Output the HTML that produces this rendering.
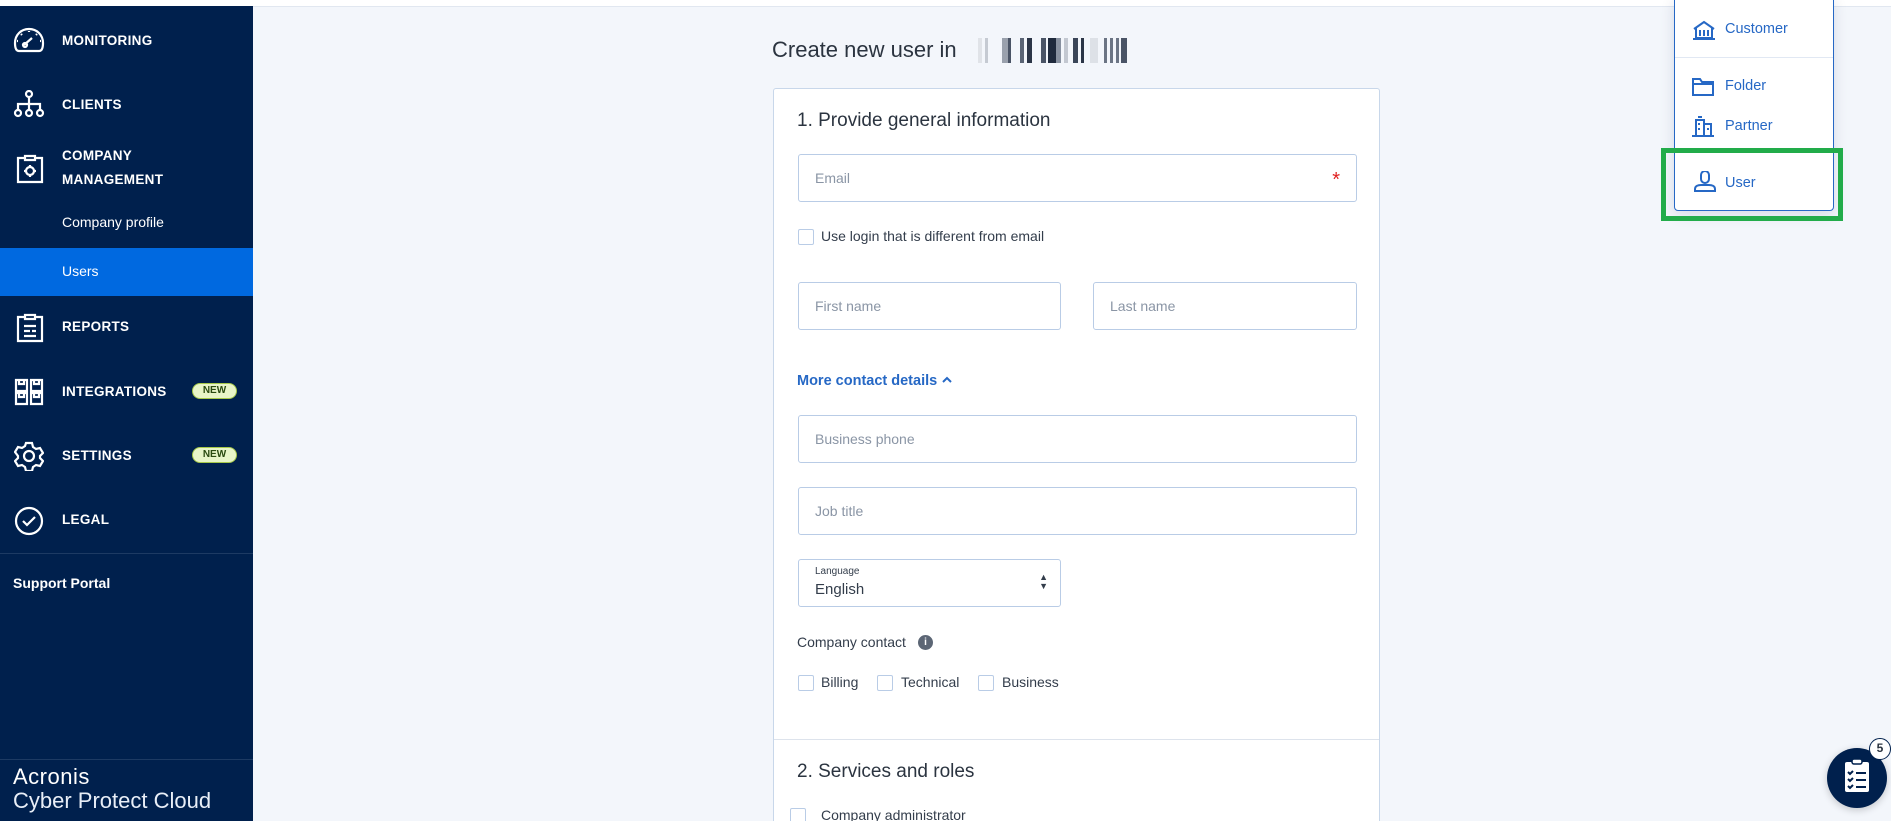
<!DOCTYPE html>
<html style="overflow:hidden;width:1891px;height:821px"><head><meta charset="utf-8"><style>
*{box-sizing:border-box;margin:0;padding:0}
body{width:1891px;height:821px;overflow:hidden;background:#f3f6fb;font-family:"Liberation Sans",sans-serif;position:relative}
.top{position:absolute;left:0;top:0;width:1891px;height:7px;background:#fff;border-bottom:1px solid #e1e7f0}
.side{position:absolute;left:0;top:6px;width:253px;height:815px;background:#00204d;color:#fff;overflow:hidden}
.nav{position:absolute;left:62px;font-weight:bold;font-size:13.5px;letter-spacing:.3px}
.sub{position:absolute;left:62px;font-size:14px}
.ic{position:absolute;left:13px}
.badge{position:absolute;left:192px;width:45px;height:16px;border-radius:8px;background:#e8f5c8;border:1.5px solid #a7c94a;color:#2a4a10;font-size:10px;font-weight:bold;text-align:center;line-height:13px}
.sep{position:absolute;left:0;width:253px;height:1px;background:#1d3a63}
.abs{position:absolute}
.card{position:absolute;left:773px;top:88px;width:607px;height:740px;background:#fff;border:1px solid #c8d7ea;border-radius:3px}
.inp{position:absolute;height:48px;border:1px solid #b9cce6;border-radius:3px;background:#fff;color:#8a95a5;font-size:14px;padding-left:16px;line-height:46px}
.cb{position:absolute;width:16px;height:16px;border:1px solid #b9cce6;border-radius:2px;background:#fff}
.lbl{position:absolute;font-size:14px;color:#333d4b}
.dd{position:absolute;left:1674px;top:-4px;width:160px;height:215px;background:#fff;border:1px solid #2668c5;border-radius:4px;box-shadow:0 4px 14px rgba(0,32,77,.12)}
.ddi{position:absolute;left:50px;font-size:14.5px;color:#2668c5}
</style></head><body>
<div class="top"></div>
<div class="side">
<svg class="ic" style="top:20px" width="32" height="28" viewBox="0 0 32 28" fill="none" stroke="#fff" stroke-width="2.2"><path d="M6 25C3 25 2 22 2 17 2 9 8 3 16 3s14 6 14 14c0 5-1 8-4 8z"/><path d="M11 19l8-7"/><circle cx="12" cy="19" r="2"/><path d="M9 9l-1-1M16 6V5M23 9l1-1M5 15H4M27 15h1"/></svg>
<svg class="ic" style="top:84px" width="32" height="28" viewBox="0 0 32 28" fill="none" stroke="#fff" stroke-width="2.2"><circle cx="16" cy="4" r="3"/><path d="M16 7v7M5 20v-6h22v6M16 14v6"/><circle cx="5" cy="23" r="3"/><circle cx="16" cy="23" r="3"/><circle cx="27" cy="23" r="3"/></svg>
<svg class="ic" style="top:147px;left:16px" width="28" height="31" viewBox="0 0 28 31" fill="none" stroke="#fff" stroke-width="2.2"><path d="M9 5H2v24h24V5h-7"/><path d="M9 7V3h10v4z"/><circle cx="14" cy="18" r="4"/><path d="M14 12v2M14 22v2M8 18h2M18 18h2"/></svg>
<div class="nav" style="top:27px">MONITORING</div>
<div class="nav" style="top:91px">CLIENTS</div>
<div class="nav" style="top:142px">COMPANY</div>
<div class="nav" style="top:166px">MANAGEMENT</div>
<div class="sub" style="top:208px">Company profile</div>
<div class="abs" style="left:0;top:242px;width:253px;height:48px;background:#0069e0"></div>
<div class="sub" style="top:257px">Users</div>
<svg class="ic" style="top:306px;left:16px" width="28" height="31" viewBox="0 0 28 31" fill="none" stroke="#fff" stroke-width="2.2"><path d="M9 5H2v24h24V5h-7"/><path d="M9 7V3h10v4z"/><path d="M8 14h12M8 19h6M16 19h4M8 24h12"/></svg>
<svg class="ic" style="top:372px;left:14px" width="30" height="28" viewBox="0 0 30 28" fill="none" stroke="#fff" stroke-width="2.2"><path d="M2 2h11v11H2zM17 2h11v11H17zM2 15h11v11H2zM17 15h11v11H17z"/><path d="M5 2v4h5V2M20 2v4h5V2M5 15v4h5v-4M20 15v4h5v-4"/></svg>
<svg class="ic" style="top:435px;left:14px" width="30" height="30" viewBox="0 0 30 30" fill="none" stroke="#fff" stroke-width="2.2"><path d="M12 2h6l1 4 3 2 4-1 3 5-3 3v2l3 3-3 5-4-1-3 2-1 4h-6l-1-4-3-2-4 1-3-5 3-3v-2L1 11l3-5 4 1 3-2z"/><circle cx="15" cy="15" r="5"/></svg>
<svg class="ic" style="top:500px;left:14px" width="30" height="30" viewBox="0 0 30 30" fill="none" stroke="#fff" stroke-width="2.2"><circle cx="15" cy="15" r="13"/><path d="M9 15l4 4 8-8"/></svg>
<div class="nav" style="top:313px">REPORTS</div>
<div class="nav" style="top:378px">INTEGRATIONS</div><div class="badge" style="top:377px">NEW</div>
<div class="nav" style="top:442px">SETTINGS</div><div class="badge" style="top:441px">NEW</div>
<div class="nav" style="top:506px">LEGAL</div>
<div class="sep" style="top:547px"></div>
<div class="nav" style="left:13px;top:569px;font-size:14px;letter-spacing:0">Support Portal</div>
<div class="sep" style="top:753px"></div>
<div class="abs" style="left:13px;top:758px;font-size:22px;letter-spacing:.5px">Acronis</div>
<div class="abs" style="left:13px;top:782px;font-size:22px;font-weight:300;color:#e8eef7">Cyber Protect Cloud</div>
</div>

<div class="abs" style="left:772px;top:37px;font-size:22px;color:#2b3440">Create new user in</div>
<svg class="abs" style="left:978px;top:38px" width="190" height="25"><g fill="#5a6475">
<rect x="0" width="4" height="25" fill="#e0e3e8"/><rect x="7" width="3" height="25" fill="#c5cad2"/><rect x="24" width="6" height="25" fill="#9aa1ad"/><rect x="30" width="3" height="25" fill="#4a5466"/><rect x="42" width="4" height="25"/><rect x="49" width="5" height="25" fill="#2b3547"/><rect x="63" width="5" height="25" fill="#4a5466"/><rect x="70" width="8" height="25" fill="#1f2a3d"/><rect x="78" width="5" height="25" fill="#8891a0"/><rect x="86" width="4" height="25" fill="#c3c8d1"/><rect x="95" width="5" height="25" fill="#3a4558"/><rect x="103" width="3" height="25" fill="#2b3547"/><rect x="112" width="8" height="25" fill="#dde1e7"/><rect x="126" width="3" height="25" fill="#6b7484"/><rect x="132" width="3" height="25" fill="#6b7484"/><rect x="138" width="3" height="25" fill="#6b7484"/><rect x="143" width="6" height="25" fill="#4a5466"/></g></svg>

<div class="card">
<div class="abs" style="left:23px;top:21px;font-size:19px;color:#2b3440">1. Provide general information</div>
<div class="inp" style="left:24px;top:65px;width:559px">Email<span style="position:absolute;right:16px;top:2px;color:#e02020;font-size:20px">*</span></div>
<div class="cb" style="left:24px;top:140px"></div><div class="lbl" style="left:47px;top:139px">Use login that is different from email</div>
<div class="inp" style="left:24px;top:193px;width:263px">First name</div>
<div class="inp" style="left:319px;top:193px;width:264px">Last name</div>
<div class="abs" style="left:23px;top:284px;font-size:14.5px;font-weight:bold;color:#2668c5">More contact details <svg width="12" height="10" viewBox="0 0 12 10"><path d="M2 7l4-4 4 4" fill="none" stroke="#2668c5" stroke-width="2"/></svg></div>
<div class="inp" style="left:24px;top:326px;width:559px">Business phone</div>
<div class="inp" style="left:24px;top:398px;width:559px">Job title</div>
<div class="inp" style="left:24px;top:470px;width:263px;color:#333d4b;line-height:normal">
<div style="position:absolute;left:16px;top:6px;font-size:10px">Language</div>
<div style="position:absolute;left:16px;top:21px;font-size:15px">English</div>
<div style="position:absolute;right:12px;top:13px;font-size:9px;line-height:9px">▲<br>▼</div></div>
<div class="lbl" style="left:23px;top:545px">Company contact</div>
<div class="abs" style="left:144px;top:546px;width:15px;height:15px;border-radius:50%;background:#5c6675;color:#fff;font-size:10px;font-weight:bold;text-align:center;line-height:15px">i</div>
<div class="cb" style="left:24px;top:586px"></div><div class="lbl" style="left:47px;top:585px">Billing</div>
<div class="cb" style="left:103px;top:586px"></div><div class="lbl" style="left:127px;top:585px">Technical</div>
<div class="cb" style="left:204px;top:586px"></div><div class="lbl" style="left:228px;top:585px">Business</div>
<div class="abs" style="left:0;top:650px;width:605px;height:1px;background:#dde3ec"></div>
<div class="abs" style="left:23px;top:672px;font-size:19px;color:#2b3440">2. Services and roles</div>
<div class="cb" style="left:16px;top:719px"></div><div class="lbl" style="left:47px;top:718px">Company administrator</div>
</div>

<div class="dd">
<svg class="abs" style="left:17px;top:23px" width="24" height="20" viewBox="0 0 24 20" fill="none" stroke="#2668c5" stroke-width="2"><path d="M2 9L12 2l10 7M4 8v10h16V8M1 19h22M8 10v6M12 10v6M16 10v6"/></svg>
<div class="ddi" style="top:24px">Customer</div>
<div class="abs" style="left:0;top:60px;width:158px;height:1px;background:#e1e8f3"></div>
<svg class="abs" style="left:17px;top:81px" width="22" height="18" viewBox="0 0 22 18" fill="none" stroke="#2668c5" stroke-width="2"><path d="M1 1h7l2 3h11v13H1zM1 6h20"/></svg>
<div class="ddi" style="top:81px">Folder</div>
<svg class="abs" style="left:17px;top:118px" width="22" height="22" viewBox="0 0 22 22" fill="none" stroke="#2668c5" stroke-width="2"><path d="M0 21h22M4 21V5h8v16M6 2h4M12 9h7v12M7 8v2M7 13v2M16 13v2"/></svg>
<div class="ddi" style="top:121px">Partner</div>
<svg class="abs" style="left:19px;top:174px" width="22" height="22" viewBox="0 0 22 22" fill="none" stroke="#2668c5" stroke-width="2"><path d="M7 4a4 4 0 018 0v4a4 4 0 01-8 0z"/><path d="M1 20v-2c0-3 3-4 6-4h8c3 0 6 1 6 4v2z"/></svg>
<div class="ddi" style="top:178px">User</div>
</div>
<div class="abs" style="left:1661px;top:148px;width:182px;height:73px;border:5px solid #22ac4a"></div>

<div class="abs" style="left:1827px;top:748px;width:60px;height:60px;border-radius:50%;background:#00204d;box-shadow:0 2px 8px rgba(0,0,0,.2)"></div>
<svg class="abs" style="left:1843px;top:758px" width="28" height="36" viewBox="0 0 28 36"><rect x="2" y="4" width="24" height="30" rx="2" fill="#fff"/><rect x="9" y="1" width="10" height="5" rx="2" fill="#fff" stroke="#00204d" stroke-width="1.5"/><g stroke="#00204d" stroke-width="2" fill="none"><path d="M5 14l2 2 3-3M5 21l2 2 3-3M5 28l2 2 3-3M13 15h10M13 22h10M13 29h10"/></g></svg>
<div class="abs" style="left:1869px;top:738px;width:22px;height:22px;border-radius:50%;background:#fff;border:1.5px solid #00204d;color:#2b3440;font-size:12px;font-weight:bold;text-align:center;line-height:19px">5</div>
</body></html>
